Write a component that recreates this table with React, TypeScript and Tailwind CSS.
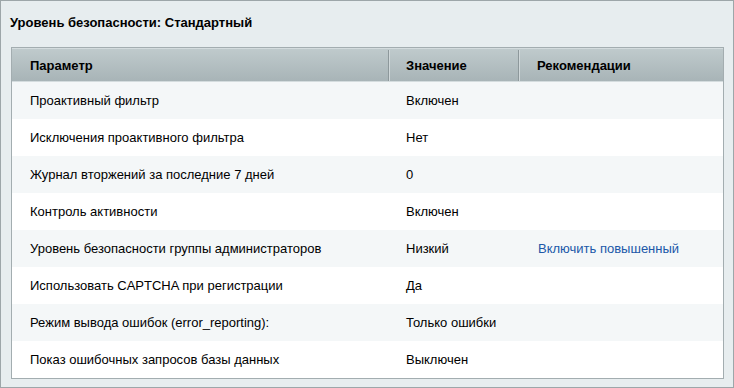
import React from "react";

const rows: [string, string, string?][] = [
  ["Проактивный фильтр", "Включен"],
  ["Исключения проактивного фильтра", "Нет"],
  ["Журнал вторжений за последние 7 дней", "0"],
  ["Контроль активности", "Включен"],
  ["Уровень безопасности группы администраторов", "Низкий", "Включить повышенный"],
  ["Использовать CAPTCHA при регистрации", "Да"],
  ["Режим вывода ошибок (error_reporting):", "Только ошибки"],
  ["Показ ошибочных запросов базы данных", "Выключен"],
];

export default function App() {
  return (
    <div
      className="w-[734px] h-[388px] bg-[#e7edef] border border-[#9da6a9] text-[13px] text-black box-border"
      style={{ fontFamily: '"Liberation Sans", Arial, sans-serif' }}
    >
      <div className="h-[46px] pl-[9px] pt-[14px] font-bold text-[13px] leading-[16px] text-[#000]">
        Уровень безопасности: Стандартный
      </div>
      <div className="ml-[10px] mr-[9px] border border-[#a3adb0] bg-white">
        <div className="flex h-[34px] border-t border-[#d4dcde] bg-gradient-to-b from-[#bfcacc] to-[#a8b4b7] font-bold border-b border-[#8f9a9d] pt-[1px]">
          <div className="w-[377px] pl-[18px] flex items-center border-r border-[#8d989b]">Параметр</div>
          <div className="w-[130px] pl-[16px] flex items-center border-l border-[#d0d8da] border-r border-r-[#8d989b]">Значение</div>
          <div className="flex-1 pl-[17px] flex items-center border-l border-[#d0d8da]">Рекомендации</div>
        </div>
        {rows.map(([a, b, c], i) => (
          <div
            key={i}
            className={`flex h-[37px] items-center pt-[1px] ${i % 2 === 0 ? "bg-[#f4f7f8]" : "bg-white"}`}
          >
            <div className="w-[377px] pl-[18px]">{a}</div>
            <div className="w-[131px] pl-[17px]">{b}</div>
            <div className="flex-1 pl-[18px] text-[#2058a8]">{c ?? ""}</div>
          </div>
        ))}
      </div>
    </div>
  );
}
